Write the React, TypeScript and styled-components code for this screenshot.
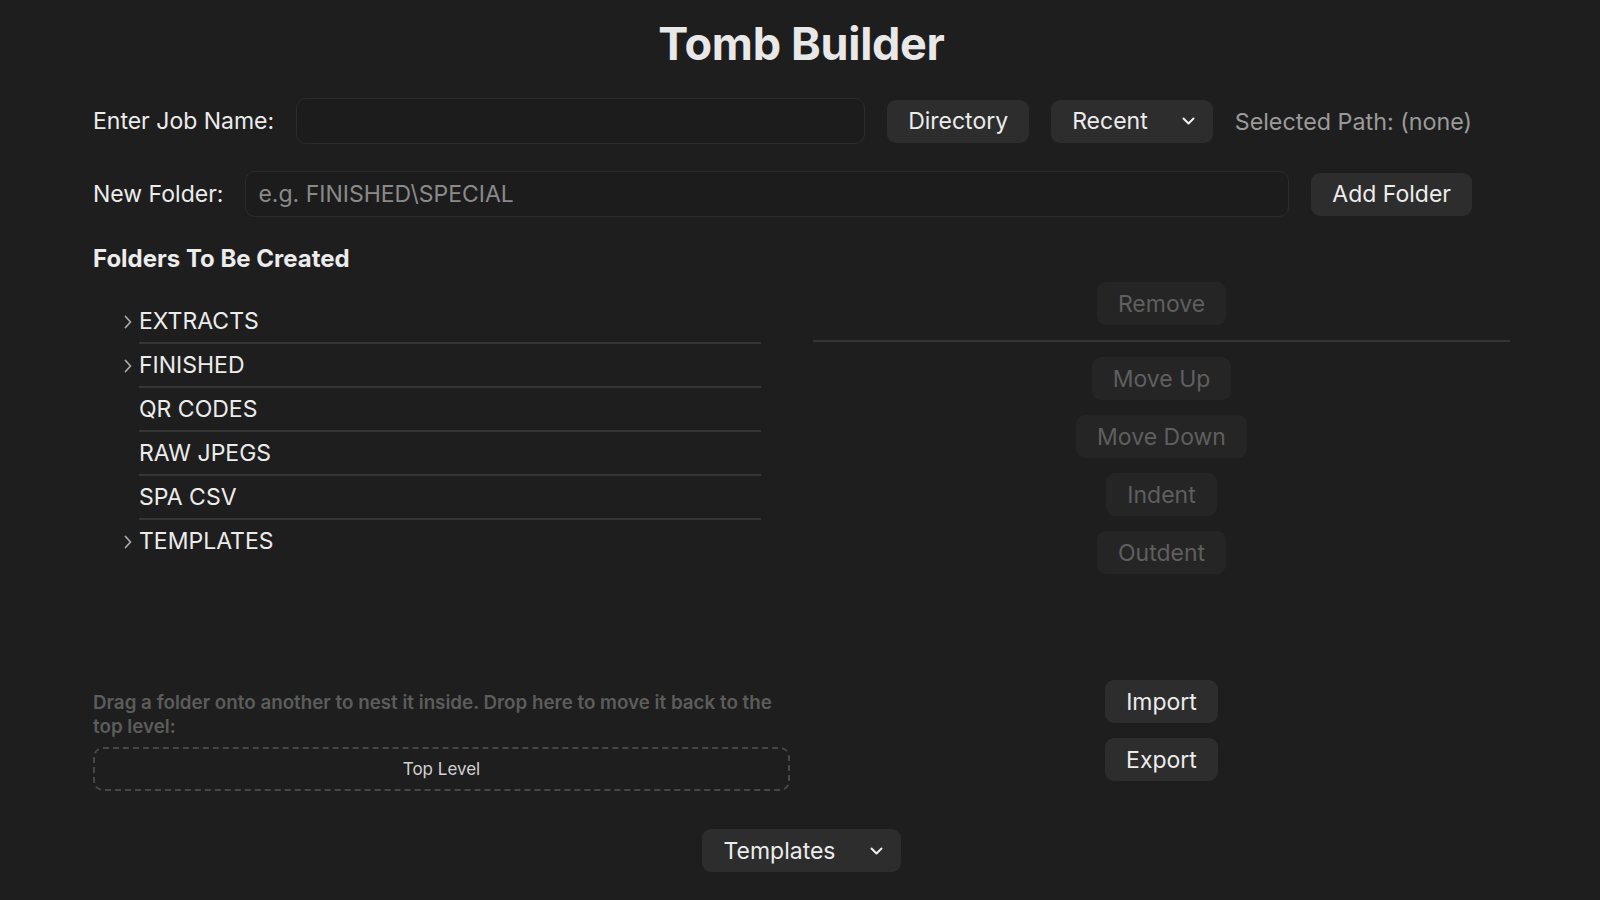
import React, { useState } from 'react';
import styled, { createGlobalStyle } from 'styled-components';

const colors = {
  bg: '#1e1e1e',
  text: '#ececec',
  muted: '#9a9a9a',
  faint: '#5c5c5c',
  button: '#2d2d2d',
  buttonDisabled: '#252525',
  textDisabled: '#5f5f5f',
  line: '#353535',
  inputBorder: '#2c2c2c',
};

const GlobalStyle = createGlobalStyle`
  html, body {
    margin: 0;
    background: ${colors.bg};
    color: ${colors.text};
    font-family: Inter, "Noto Sans", sans-serif;
  }
  * {
    box-sizing: border-box;
  }
`;

const Page = styled.div`
  display: flex;
  flex-direction: column;
  min-height: 900px;
  padding: 17px 90px 0 93px;
`;

const Title = styled.h1`
  margin: 0;
  text-align: center;
  font-size: 45px;
  line-height: 53px;
  font-weight: 700;
  letter-spacing: -0.3px;
  color: #e8e8e8;
`;

const TopRows = styled.div`
  display: flex;
  flex-direction: column;
  gap: 27px;
  margin-top: 28px;
  padding-right: 38px;
`;

const Row = styled.div`
  display: flex;
  align-items: center;
  gap: 22px;
  height: 46px;
`;

const Label = styled.label`
  font-size: 23px;
  color: ${colors.text};
  white-space: nowrap;
`;

const TextInput = styled.input`
  flex: 1;
  min-width: 0;
  height: 46px;
  padding: 0 12px;
  background: #1c1c1c;
  border: 1px solid ${colors.inputBorder};
  border-radius: 10px;
  color: ${colors.text};
  font-family: inherit;
  font-size: 23px;
  outline: none;
  &::placeholder {
    color: #8a8a8a;
  }
`;

const Button = styled.button<{ disabled?: boolean }>`
  display: inline-flex;
  align-items: center;
  justify-content: center;
  height: 43px;
  padding: 0 21px;
  border: none;
  border-radius: 9px;
  background: ${({ disabled }) => (disabled ? colors.buttonDisabled : colors.button)};
  color: ${({ disabled }) => (disabled ? colors.textDisabled : colors.text)};
  font-family: inherit;
  font-size: 23px;
  white-space: nowrap;
  cursor: ${({ disabled }) => (disabled ? 'default' : 'pointer')};
`;

const DropButton = styled(Button)`
  gap: 34px;
  padding: 0 18px 0 21px;
`;

const PathText = styled.span`
  font-size: 23.3px;
  color: ${colors.muted};
  white-space: nowrap;
`;

const SectionTitle = styled.h2`
  margin: 28px 0 0;
  font-size: 24px;
  line-height: 28px;
  font-weight: 700;
  color: ${colors.text};
`;

const Columns = styled.div`
  display: grid;
  grid-template-columns: 1fr 1fr;
  gap: 23px;
  height: 509px;
  margin-top: 9px;
`;

const LeftColumn = styled.div`
  display: flex;
  flex-direction: column;
  justify-content: space-between;
`;

const Tree = styled.ul`
  list-style: none;
  margin: 18px 29px 0 27px;
  padding: 0;
`;

const TreeRow = styled.li`
  display: flex;
  align-items: stretch;
  &:last-child > span:last-child {
    border-bottom-color: transparent;
  }
`;

const Toggle = styled.span`
  display: flex;
  align-items: center;
  justify-content: center;
  width: 19px;
  padding-right: 4px;
  color: #a8a8a8;
`;

const TreeLabel = styled.span`
  flex: 1;
  display: flex;
  align-items: center;
  height: 44px;
  font-size: 23px;
  color: ${colors.text};
  border-bottom: 2px solid ${colors.line};
`;

const DropArea = styled.div`
  display: flex;
  flex-direction: column;
  gap: 8px;
`;

const Hint = styled.p`
  margin: 0;
  font-size: 18.8px;
  line-height: 24px;
  font-weight: 600;
  color: ${colors.faint};
`;

const DropZone = styled.div`
  display: flex;
  align-items: center;
  justify-content: center;
  height: 44px;
  border: 2px dashed #474747;
  border-radius: 10px;
  font-size: 17px;
  color: #d2d2d2;
`;

const RightColumn = styled.div`
  display: flex;
  flex-direction: column;
  justify-content: space-between;
  padding-bottom: 10px;
`;

const ActionGroup = styled.div`
  display: flex;
  flex-direction: column;
  align-items: center;
  gap: 15px;
`;

const Divider = styled.hr`
  align-self: stretch;
  margin: 0;
  border: none;
  border-top: 2px solid ${colors.line};
`;

const Footer = styled.div`
  display: flex;
  justify-content: center;
  margin-top: 38px;
`;

const ChevronDown = () => (
  <svg width="13" height="8" viewBox="0 0 13 8" fill="none">
    <path d="M1.5 1.5 L6.5 6.5 L11.5 1.5" stroke="#f0f0f0" strokeWidth="2" strokeLinecap="round" strokeLinejoin="round" />
  </svg>
);

const ChevronRight = () => (
  <svg width="8" height="14" viewBox="0 0 8 14" fill="none">
    <path d="M1.5 1.5 L6.5 7 L1.5 12.5" stroke="currentColor" strokeWidth="1.8" strokeLinecap="round" strokeLinejoin="round" />
  </svg>
);

const folders = [
  { name: 'EXTRACTS', hasChildren: true },
  { name: 'FINISHED', hasChildren: true },
  { name: 'QR CODES', hasChildren: false },
  { name: 'RAW JPEGS', hasChildren: false },
  { name: 'SPA CSV', hasChildren: false },
  { name: 'TEMPLATES', hasChildren: true },
];

const App = () => {
  const [jobName, setJobName] = useState('');
  const [newFolder, setNewFolder] = useState('');

  return (
    <>
      <GlobalStyle />
      <Page>
        <Title>Tomb Builder</Title>
        <TopRows>
          <Row>
            <Label>Enter Job Name:</Label>
            <TextInput value={jobName} onChange={(e) => setJobName(e.target.value)} />
            <Button>Directory</Button>
            <DropButton>
              Recent
              <ChevronDown />
            </DropButton>
            <PathText>Selected Path: (none)</PathText>
          </Row>
          <Row>
            <Label>New Folder:</Label>
            <TextInput
              value={newFolder}
              placeholder="e.g. FINISHED\SPECIAL"
              onChange={(e) => setNewFolder(e.target.value)}
            />
            <Button>Add Folder</Button>
          </Row>
        </TopRows>
        <SectionTitle>Folders To Be Created</SectionTitle>
        <Columns>
          <LeftColumn>
            <Tree>
              {folders.map((folder) => (
                <TreeRow key={folder.name}>
                  <Toggle>{folder.hasChildren && <ChevronRight />}</Toggle>
                  <TreeLabel>{folder.name}</TreeLabel>
                </TreeRow>
              ))}
            </Tree>
            <DropArea>
              <Hint>Drag a folder onto another to nest it inside. Drop here to move it back to the top level:</Hint>
              <DropZone>Top Level</DropZone>
            </DropArea>
          </LeftColumn>
          <RightColumn>
            <ActionGroup>
              <Button disabled>Remove</Button>
              <Divider />
              <Button disabled>Move Up</Button>
              <Button disabled>Move Down</Button>
              <Button disabled>Indent</Button>
              <Button disabled>Outdent</Button>
            </ActionGroup>
            <ActionGroup>
              <Button>Import</Button>
              <Button>Export</Button>
            </ActionGroup>
          </RightColumn>
        </Columns>
        <Footer>
          <DropButton>
            Templates
            <ChevronDown />
          </DropButton>
        </Footer>
      </Page>
    </>
  );
};

export default App;
